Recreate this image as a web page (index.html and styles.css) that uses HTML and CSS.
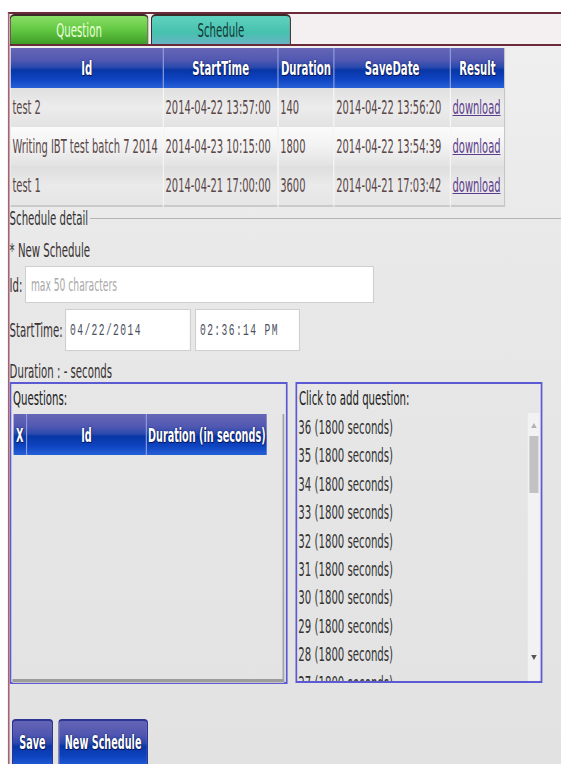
FILE: index.html
```html
<!DOCTYPE html>
<html>
<head>
<meta charset="utf-8">
<title>Schedule</title>
<link rel="stylesheet" href="styles.css">
</head>
<body>
<div class="page">
  <div class="panel">
    <div class="tabs">
      <div class="tab tab-question">Question</div>
      <div class="tab tab-schedule">Schedule</div>
    </div>

    <table class="grid schedules">
      <colgroup>
        <col class="c-id"><col class="c-start"><col class="c-dur"><col class="c-save"><col class="c-res">
      </colgroup>
      <thead>
        <tr><th>Id</th><th>StartTime</th><th>Duration</th><th>SaveDate</th><th>Result</th></tr>
      </thead>
      <tbody>
        <tr class="r1"><td>test 2</td><td>2014-04-22 13:57:00</td><td>140</td><td>2014-04-22 13:56:20</td><td><a href="#">download</a></td></tr>
        <tr class="r2"><td>Writing IBT test batch 7 2014</td><td>2014-04-23 10:15:00</td><td>1800</td><td>2014-04-22 13:54:39</td><td><a href="#">download</a></td></tr>
        <tr class="r3"><td>test 1</td><td>2014-04-21 17:00:00</td><td>3600</td><td>2014-04-21 17:03:42</td><td><a href="#">download</a></td></tr>
      </tbody>
    </table>

    <fieldset class="detail">
      <legend>Schedule detail</legend>
      <div class="line line-new">* New Schedule</div>
      <div class="line line-id">
        <label class="lbl">Id:</label>
        <input class="field field-id" type="text" placeholder="max 50 characters">
      </div>
      <div class="line line-start">
        <label class="lbl">StartTime:</label>
        <input class="field mono field-date" type="text" value="04/22/2014">
        <input class="field mono field-time" type="text" value="02:36:14 PM">
      </div>
      <div class="line line-dur">Duration : - seconds</div>

      <div class="boxes">
        <div class="box box-questions">
          <div class="box-title">Questions:</div>
          <div class="qwrap">
            <table class="grid qtable">
              <colgroup><col class="q-x"><col class="q-id"><col class="q-dur"></colgroup>
              <thead><tr><th>X</th><th>Id</th><th>Duration (in seconds)</th></tr></thead>
            </table>
          </div>
        </div>

        <div class="box box-pool">
          <div class="box-title">Click to add question:</div>
          <div class="pool">
            <ul class="pool-list">
              <li>36 (1800 seconds)</li>
              <li>35 (1800 seconds)</li>
              <li>34 (1800 seconds)</li>
              <li>33 (1800 seconds)</li>
              <li>32 (1800 seconds)</li>
              <li>31 (1800 seconds)</li>
              <li>30 (1800 seconds)</li>
              <li>29 (1800 seconds)</li>
              <li>28 (1800 seconds)</li>
              <li>27 (1800 seconds)</li>
            </ul>
            <div class="sbar">
              <div class="sbar-up"><span class="arrow-up"></span></div>
              <div class="sbar-thumb"></div>
              <div class="sbar-down"><span class="arrow-down"></span></div>
            </div>
          </div>
        </div>
      </div>
    </fieldset>

    <div class="actions">
      <button class="btn btn-save" type="button">Save</button>
      <button class="btn btn-new" type="button">New Schedule</button>
    </div>
  </div>
</div>
</body>
</html>
```
FILE: styles.css
```css
html, body {
  margin: 0;
  padding: 0;
  overflow: hidden;
  background: #fff;
}

body {
  width: 561px;
  height: 764px;
}

/* the app is laid out wide and rendered with a narrow horizontal scale */
.page {
  width: 993px;
  box-sizing: border-box;
  padding: 12px 0 0 14px;
  transform: scaleX(0.565);
  transform-origin: 0 0;
  font-family: "DejaVu Sans Condensed", "DejaVu Sans", sans-serif;
  font-stretch: condensed;
  font-size: 20px;
  color: #3a3232;
}

.panel {
  height: 760px;
  border-top: 2px solid #6a2a3a;
  border-left: 3px solid #a06474;
  background: linear-gradient(#f0f0f0, #e8e8e8 35%, #e2e2e2);
  overflow: hidden;
}

/* ---- tabs ---- */
.tabs {
  display: flex;
  align-items: flex-end;
  gap: 4px;
  height: 30px;
  background: #f4f0f2;
  border-bottom: 2px solid #6a2a3a;
}

.tab {
  box-sizing: border-box;
  height: 30px;
  display: flex;
  align-items: center;
  justify-content: center;
  border: 2px solid #3d2b2b;
  border-bottom: 0;
  border-radius: 9px 9px 0 0 / 5px 5px 0 0;
  font-size: 20px;
}

.tab-question {
  width: 246px;
  background: linear-gradient(#8ade66, #62c842 50%, #3e9c28);
  color: #eaffd9;
}

.tab-schedule {
  width: 248px;
  background: linear-gradient(#5fd2bf, #46c1ae 60%, #68b4c4);
  color: #143838;
}

/* ---- grids ---- */
.grid {
  border-collapse: collapse;
  table-layout: fixed;
}

.grid th {
  padding: 0;
  font-weight: bold;
  font-size: 20px;
  color: #fff;
  text-align: center;
  white-space: nowrap;
  text-shadow: 0 0 2px #0a1450, 1px 1px 0 #0a1450;
  background: linear-gradient(#6666b6 0%, #5258b2 30%, #2a4aae 48%, #0836a6 55%, #0e44c2 78%, #2660d6 100%);
  border-left: 2px solid #8d9cdc;
}

.grid th:first-child {
  border-left: 0;
}

.schedules {
  width: 874px;
  margin: 2px 0 0 2px;
  border-right: 2px solid #c6c6c6;
  border-bottom: 2px solid #cacaca;
}

.c-id { width: 270px; }
.c-start { width: 203px; }
.c-dur { width: 99px; }
.c-save { width: 206px; }
.c-res { width: 96px; }

.schedules th {
  height: 40px;
}

.schedules td {
  height: 39px;
  padding: 0 0 0 3px;
  font-size: 19.5px;
  white-space: nowrap;
  overflow: hidden;
  color: #5a4848;
  border-left: 2px solid rgba(255, 255, 255, 0.55);
}

.schedules td:first-child {
  border-left: 0;
}

.schedules tr.r1 td { background: linear-gradient(#e0e0e0, #ececec 50%, #e2e2e2); }
.schedules tr.r2 td { background: linear-gradient(#fbfbfb, #f2f2f2 50%, #e2e2e2); }
.schedules tr.r3 td { background: linear-gradient(#dedede, #eaeaea 50%, #e6e6e6); }

.schedules a {
  color: #5c3c8c;
  text-decoration: underline;
}

/* ---- detail form ---- */
.detail {
  margin: 0;
  padding: 0;
  min-width: 0;
  border: 0;
  border-top: 1px solid #b4b4b4;
}

.detail legend {
  padding: 0 3px 0 0;
  margin: 0;
  line-height: 22px;
  color: #333;
}

.line {
  display: flex;
  align-items: center;
}

.line-new {
  height: 28px;
  margin-top: 7px;
}

.line-id {
  height: 37px;
  margin-top: 2px;
}

.line-start {
  height: 42px;
  margin-top: 6px;
}

.line-dur {
  height: 22px;
  margin-top: 9px;
}

.lbl {
  margin-right: 4px;
}

.field {
  box-sizing: border-box;
  margin: 0;
  background: #fff;
  border: 2px solid #cfcfcf;
  border-top-width: 1px;
  border-bottom-width: 1px;
  border-radius: 0;
  outline: none;
  font: inherit;
}

.field-id {
  width: 618px;
  height: 37px;
  padding: 0 0 0 9px;
  font-size: 18px;
  color: #333;
}

.field-id::placeholder {
  color: #a9a9a9;
}

.mono {
  height: 42px;
  padding: 0 0 0 7px;
  font-family: "Liberation Mono", "DejaVu Sans Mono", monospace;
  font-size: 17px;
  letter-spacing: 2.5px;
  color: #4a4f5e;
}

.field-date {
  width: 223px;
}

.field-time {
  width: 186px;
  margin-left: 7px;
}

/* ---- question boxes ---- */
.boxes {
  display: flex;
  align-items: flex-start;
  gap: 14px;
}

.box {
  box-sizing: border-box;
  border: 3px solid #5c5ad2;
  border-top-width: 2px;
  border-bottom-width: 2px;
}

.box-questions {
  width: 492px;
}

.box-pool {
  width: 437px;
}

.box-title {
  height: 29px;
  line-height: 29px;
  padding-left: 3px;
  color: #222;
}

.qwrap {
  box-sizing: border-box;
  width: 481px;
  height: 268px;
  margin-left: 2px;
  border-right: 3px solid #a4a4a4;
  border-bottom: 3px solid #9c9c9c;
  box-shadow: 0 1px 0 #c4c4c4;
}

.qtable {
  width: 448px;
  margin: 1px 0 0 2px;
}

.qtable th {
  height: 41px;
  font-size: 19px;
}

.q-x { width: 23px; }
.q-id { width: 212px; }
.q-dur { width: 213px; }

.pool {
  display: flex;
  height: 268px;
}

.pool-list {
  flex: 1;
  margin: 0;
  padding: 0 0 0 2px;
  list-style: none;
  overflow: hidden;
  color: #333;
}

.pool-list li {
  height: 28.4px;
  line-height: 28.4px;
  white-space: nowrap;
}

.sbar {
  width: 21px;
  margin-right: 2px;
  display: flex;
  flex-direction: column;
  align-items: center;
  background: #f2f2f2;
}

.sbar-up {
  height: 19px;
  display: flex;
  align-items: center;
  justify-content: center;
  padding-top: 3px;
}

.sbar-thumb {
  width: 16px;
  height: 57px;
  margin-top: 1px;
  background: #c2c2c2;
}

.sbar-down {
  margin-top: auto;
  height: 26px;
  display: flex;
  align-items: flex-start;
  justify-content: center;
}

.arrow-up {
  width: 0;
  height: 0;
  border-left: 5px solid transparent;
  border-right: 5px solid transparent;
  border-bottom: 5px solid #b2b2b2;
}

.arrow-down {
  width: 0;
  height: 0;
  border-left: 5px solid transparent;
  border-right: 5px solid transparent;
  border-top: 5px solid #555;
}

/* ---- action buttons ---- */
.actions {
  display: flex;
  gap: 9px;
  margin: 35px 0 0 4px;
}

.btn {
  box-sizing: border-box;
  height: 48px;
  padding: 0 0 4px;
  border: 2px solid #2c3494;
  border-bottom: 0;
  border-radius: 7px 7px 0 0 / 4px 4px 0 0;
  background: linear-gradient(#6464b4 0%, #5056b0 30%, #2a48ae 48%, #0836a6 55%, #0e44c2 78%, #2660d6 100%);
  color: #fff;
  font-family: inherit;
  font-stretch: condensed;
  font-size: 19px;
  font-weight: bold;
  text-shadow: 0 0 2px #0a1450, 1px 1px 0 #0a1450;
}

.btn-save {
  width: 73px;
}

.btn-new {
  width: 159px;
}
```
